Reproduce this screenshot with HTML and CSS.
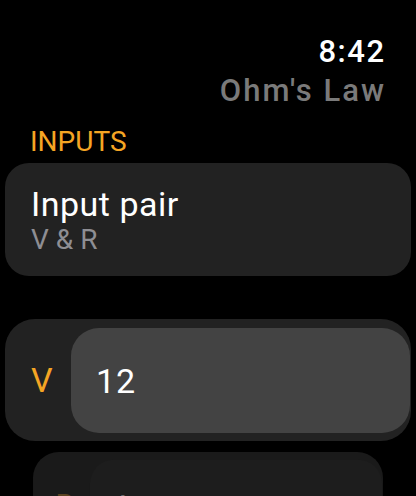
FILE: index.html
```html
<!DOCTYPE html>
<html lang="en">

<head>
    <meta charset="UTF-8">
    <title>Ohm's Law</title>
    <link rel="stylesheet" href="styles.css">
</head>

<body>

    <header class="top-bar">
        <div class="clock">8:42</div>
        <div class="app-title">Ohm's Law</div>
    </header>

    <h2 class="section-title">INPUTS</h2>

    <!-- picker row -->
    <div class="card picker">
        <div class="picker-label">Input pair</div>
        <div class="picker-value">V &amp; R</div>
    </div>

    <!-- value fields -->
    <div class="card field-row">
        <span class="field-name">V</span>
        <div class="field-box">12</div>
    </div>
    <div class="card field-row field-row--far">
        <span class="field-name">R</span>
        <div class="field-box">4</div>
    </div>

</body>

</html>
```

FILE: styles.css
```css
html,
body {
    margin: 0;
    height: 496px;
    overflow: hidden;
    background: #000;
}

body {
    font-family: Roboto, "Liberation Sans", sans-serif;
    color: #fff;
}

.top-bar {
    padding: 34px 32px 0 0;
    text-align: right;
}

.clock {
    font-size: 31px;
    font-weight: 500;
    line-height: 36px;
    letter-spacing: 1.5px;
    margin-right: -1.5px;
}

.app-title {
    margin-top: 3px;
    font-size: 31px;
    font-weight: 500;
    line-height: 36px;
    letter-spacing: 2px;
    margin-right: -2px;
    color: #7a7a7a;
}

.section-title {
    margin: 16px 0 4px;
    padding-left: 30px;
    font-size: 28px;
    font-weight: 400;
    line-height: 34px;
    color: #f5a524;
}

.card {
    margin: 0 5px;
    background: #222;
    border-radius: 24px;
}

.picker {
    padding: 21px 26px 20px;
}

.picker-label {
    font-size: 34px;
    line-height: 40px;
    letter-spacing: 0.5px;
}

.picker-value {
    font-size: 28px;
    line-height: 32px;
    color: #8e8e93;
}

/* label on the left, rounded input on the right */
.field-row {
    margin-top: 43px;
    height: 122px;
    display: flex;
    align-items: center;
    border-radius: 30px;
}

.field-name {
    width: 66px;
    padding-left: 26px;
    box-sizing: border-box;
    font-size: 34px;
    color: #f5a524;
}

.field-box {
    flex: 1;
    height: 105px;
    margin: 1px 1px 0 0;
    padding-left: 25px;
    display: flex;
    align-items: center;
    background: #434343;
    border-radius: 28px;
    font-size: 34px;
    letter-spacing: 1px;
}

.field-row--far {
    margin-top: 11px;
    background: #1a1a1a;
    transform: scale(0.862);
    transform-origin: top center;
}

.field-row--far .field-name {
    color: #5a4220;
}

.field-row--far .field-box {
    background: #1d1d1d;
    color: #6a6a6a;
}
```
